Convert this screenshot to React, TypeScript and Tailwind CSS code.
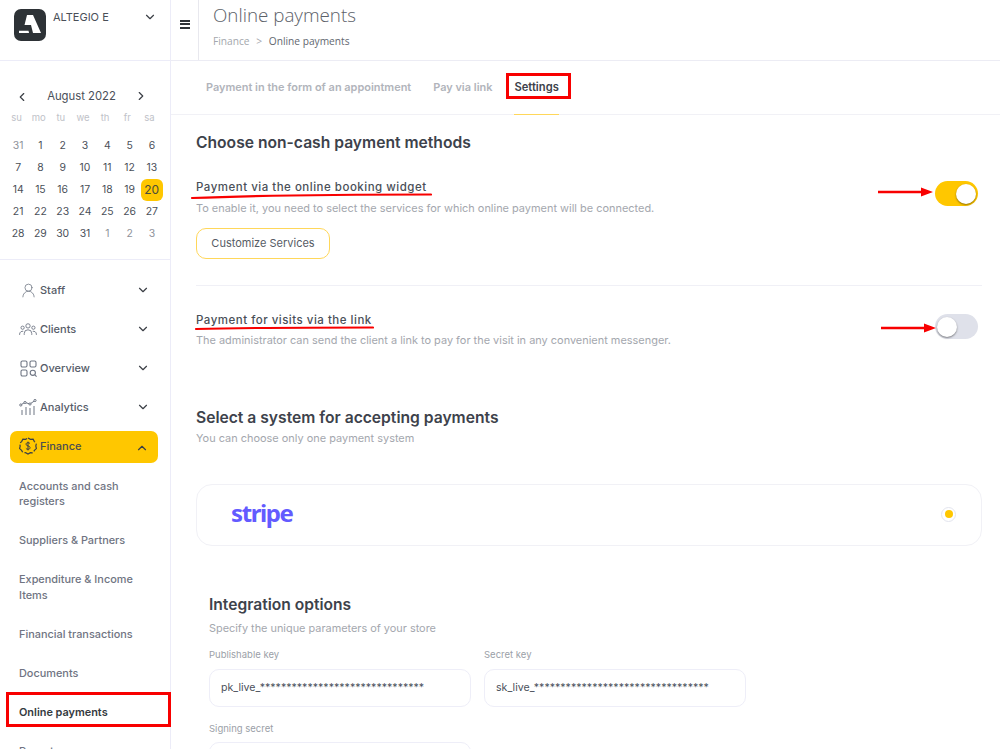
import { ChevronDown, ChevronUp, ChevronLeft, ChevronRight, UserRound } from "lucide-react";

const weeks = [
  ["31", "1", "2", "3", "4", "5", "6"],
  ["7", "8", "9", "10", "11", "12", "13"],
  ["14", "15", "16", "17", "18", "19", "20"],
  ["21", "22", "23", "24", "25", "26", "27"],
  ["28", "29", "30", "31", "1", "2", "3"],
];

function ClientsIcon() {
  return (
    <svg width="18" height="13" viewBox="0 0 20 14" fill="none" stroke="#6f7684" strokeWidth="1">
      <circle cx="10" cy="3" r="2.4" />
      <circle cx="4" cy="5" r="1.8" />
      <circle cx="16" cy="5" r="1.8" />
      <path d="M5.8 13v-1.5a4.2 4.2 0 0 1 8.4 0V13" />
      <path d="M.7 13v-1a3.3 3.3 0 0 1 4-3M19.3 13v-1a3.3 3.3 0 0 0-4-3" />
    </svg>
  );
}

function OverviewIcon() {
  return (
    <svg width="17" height="17" viewBox="0 0 17 17" fill="none" stroke="#6f7684" strokeWidth="1.1">
      <rect x="1" y="1" width="6" height="6" rx="1.4" />
      <rect x="10" y="1" width="6" height="6" rx="1.4" />
      <rect x="1" y="10" width="6" height="6" rx="1.4" />
      <circle cx="12.8" cy="12.8" r="2.6" />
      <path d="M14.8 14.8l1.8 1.8" />
    </svg>
  );
}

function AnalyticsIcon() {
  return (
    <svg width="18" height="16" viewBox="0 0 18 16" fill="none" stroke="#6f7684" strokeWidth="1">
      <circle cx="1.8" cy="6" r="1.1" />
      <circle cx="6" cy="3.5" r="1.1" />
      <circle cx="11" cy="5" r="1.1" />
      <circle cx="16" cy="1.5" r="1.1" />
      <path d="M2.7 5.3l2.4-1.4M7 3.8l3 .9M11.9 4.3l3.2-2.1" />
      <path d="M3 11v5M7 8v8M11 9v7M15 7v9" />
    </svg>
  );
}

function FinanceIcon() {
  return (
    <svg width="18" height="18" viewBox="0 0 18 18" fill="none" stroke="#3b3f46" strokeWidth="1.2">
      <path d="M9 1l2.4 1.3 2.7-.1 1.3 2.4 2 1.8-.6 2.6.6 2.6-2 1.8-1.3 2.4-2.7-.1L9 17l-2.4-1.3-2.7.1-1.3-2.4-2-1.8.6-2.6-.6-2.6 2-1.8 1.3-2.4 2.7.1z" strokeDasharray="9 2" />
      <path d="M11 6.6C10.6 6 9.9 5.7 9 5.7c-1.2 0-2 .6-2 1.5 0 2.2 4.1 1.2 4.1 3.5 0 .9-.9 1.6-2.1 1.6-1 0-1.7-.4-2.1-1M9 4.6v8.8" strokeWidth="1" />
    </svg>
  );
}

function NavRow({ icon, label, open }: { icon: React.ReactNode; label: string; open?: boolean }) {
  return (
    <div
      className={`h-[32px] ml-[10px] mr-[12px] mb-[7px] pl-[8px] pr-[9px] pb-[2px] rounded-[7px] flex items-center ${
        open ? "bg-[#ffc700] text-[#4a4d52]" : "text-[#565c68]"
      }`}
    >
      <div className="w-[22px] flex justify-center shrink-0 -ml-[1px]">{icon}</div>
      <span className="ml-[1px] flex-1 text-[11px] font-medium">{label}</span>
      {open ? (
        <ChevronUp size={14} strokeWidth={2} className="text-[#3b3f46] mt-[3px]" />
      ) : (
        <ChevronDown size={14} strokeWidth={2} className="text-[#3b3f46] mr-[-1px]" />
      )}
    </div>
  );
}

function SubItem({ children, active }: { children: React.ReactNode; active?: boolean }) {
  return (
    <div
      className={`pl-[19px] pr-[20px] py-[11.7px] text-[10.9px] leading-[15.6px] ${
        active ? "font-semibold text-[#343a40]" : "font-medium text-[#6f7482]"
      }`}
    >
      {children}
    </div>
  );
}

function Toggle({ on }: { on?: boolean }) {
  return (
    <div
      className={`w-[43px] h-[25px] rounded-full flex items-center px-[2px] ${
        on ? "bg-[#ffc700] justify-end" : "bg-[#dfe1ea] justify-start"
      }`}
    >
      <div className="w-[20px] h-[20px] rounded-full bg-white shadow-[0_1px_2px_rgba(0,0,0,0.45)]" />
    </div>
  );
}

function Arrow({ className }: { className: string }) {
  return (
    <svg className={`absolute ${className}`} width="55" height="10" viewBox="0 0 55 10" fill="#f80000">
      <path d="M0 3.8h43V0.5L55 5 43 9.5V6.2H0z" />
    </svg>
  );
}

function KeyField({ label, value, className }: { label: string; value: string; className?: string }) {
  return (
    <div className={`w-[262px] ${className ?? ""}`}>
      <div className="text-[9.5px] leading-[12px] text-[#9b9fa8] mb-[7.5px]">{label}</div>
      <div className="h-[38px] rounded-[10px] border border-[#eeeef8] pl-[11px] flex items-center text-[10.6px] text-[#4a4f5a]">
        {value}
      </div>
    </div>
  );
}

export default function App() {
  return (
    <div className="relative h-screen overflow-hidden bg-white flex font-['Inter',sans-serif]">
      <aside className="w-[171px] shrink-0 border-r border-[#ececf8] flex flex-col">
        <div className="h-[61px] shrink-0 border-b border-[#ececf8] pl-[14px] pr-[13px] pt-[9px] flex items-start">
          <div className="w-[32px] h-[32px] rounded-[7px] bg-[#2d3236]">
            <svg width="32" height="32" viewBox="0 0 32 32" fill="white">
              <path d="M13 6h6l8 18h-8l-2-8h-6.5z" />
              <path d="M5 21.7h9.5l.6 2.3H5z" />
            </svg>
          </div>
          <span className="ml-[7px] mt-[1px] flex-1 text-[11px] leading-[15px] text-[#4a4f58]">ALTEGIO E</span>
          <ChevronDown size={14} strokeWidth={2} className="text-[#3b3f46] mt-[1px]" />
        </div>

        <div className="h-[199px] shrink-0 border-b border-[#ececf8] pt-[26px] px-[7px]">
          <div className="flex items-center h-[18px] pl-[8px] pr-[15px] text-[#3b3f46]">
            <ChevronLeft size={14} strokeWidth={2} className="mt-[2px]" />
            <span className="flex-1 text-center text-[11.3px] text-[#4a4f58]">August 2022</span>
            <ChevronRight size={14} strokeWidth={2} />
          </div>
          <div className="grid grid-cols-7 mt-[5px] -ml-[1.5px] w-[155px] text-center text-[9.5px] leading-[16px] text-[#c0c2c8]">
            {["su", "mo", "tu", "we", "th", "fr", "sa"].map((d) => (
              <div key={d}>{d}</div>
            ))}
          </div>
          <div className="mt-[9px] w-[156px] text-[10.4px] text-[#4a4f58]">
            {weeks.map((week, w) => (
              <div key={w} className="grid grid-cols-7 h-[22px] items-center text-center">
                {week.map((day, i) => {
                  const muted = (w === 0 && i === 0) || (w === 4 && i > 3);
                  const today = w === 2 && i === 6;
                  return (
                    <div
                      key={i}
                      className={
                        today
                          ? "h-[22px] w-[22px] rounded-[6px] bg-[#ffc700] text-[12px] leading-[22px] text-[#4a4d3a]"
                          : muted
                            ? "text-[#8e929a]"
                            : ""
                      }
                    >
                      {day}
                    </div>
                  );
                })}
              </div>
            ))}
          </div>
        </div>

        <nav className="pt-[15px]">
          <NavRow label="Staff" icon={<UserRound size={17} strokeWidth={1.1} className="text-[#6f7684]" />} />
          <NavRow label="Clients" icon={<ClientsIcon />} />
          <NavRow label="Overview" icon={<OverviewIcon />} />
          <NavRow label="Analytics" icon={<AnalyticsIcon />} />
          <NavRow label="Finance" open icon={<FinanceIcon />} />
          <div className="-mt-[3px]">
            <SubItem>Accounts and cash registers</SubItem>
            <SubItem>Suppliers &amp; Partners</SubItem>
            <SubItem>Expenditure &amp; Income Items</SubItem>
            <SubItem>Financial transactions</SubItem>
            <SubItem>Documents</SubItem>
            <SubItem active>Online payments</SubItem>
            <SubItem>Reports</SubItem>
          </div>
        </nav>
      </aside>

      <main className="flex-1 min-w-0 flex flex-col">
        <header className="h-[61px] shrink-0 border-b border-[#ececf4] flex">
          <div className="w-[28px] h-[60px] border-r border-[#e8e8ee] flex items-center justify-center pb-[12px]">
            <div className="w-[10px] flex flex-col gap-[1.5px]">
              <div className="h-[2px] bg-[#2d3236]" />
              <div className="h-[2px] bg-[#2d3236]" />
              <div className="h-[2px] bg-[#2d3236]" />
            </div>
          </div>
          <div className="pl-[14px] pt-[2px] font-['Open_Sans',sans-serif]">
            <div className="text-[18.8px] leading-[26px] font-light text-[#5c6169]">Online payments</div>
            <div className="mt-[6px] text-[10.2px] leading-[14px] text-[#a4a7ad]">
              Finance <span className="mx-[4px]">&gt;</span> <span className="text-[#62676f]">Online payments</span>
            </div>
          </div>
        </header>

        <div className="h-[54px] shrink-0 border-b border-[#f1f1f6] pl-[35px] flex items-center text-[10.95px] font-semibold text-[#b1b4bb]">
          <span>Payment in the form of an appointment</span>
          <span className="ml-[22px]">Pay via link</span>
          <div className="relative ml-[22px] h-full flex items-center">
            <span className="text-[11.2px] text-[#3d424b]">Settings</span>
            <div className="absolute left-0 right-0 bottom-[-1px] h-[1.5px] bg-[#ffd75a]" />
          </div>
        </div>

        <div className="pl-[25px] pr-[18px]">
          <h1 className="mt-[17px] text-[15.65px] leading-[22px] font-semibold text-[#3d424b]">Choose non-cash payment methods</h1>

          <div className="mt-[25px] flex items-start justify-between pr-[4px]">
            <div>
              <div className="text-[11.5px] leading-[16px] font-medium text-[#4a4f58] tracking-[0.5px]">Payment via the online booking widget</div>
              <div className="mt-[5px] text-[10.94px] leading-[16px] text-[#a4a7ae]">
                To enable it, you need to select the services for which online payment will be connected.
              </div>
              <button className="mt-[12px] h-[31px] w-[134px] rounded-[10px] border border-[#ffd75a] text-[11px] text-[#565b64]">
                Customize Services
              </button>
            </div>
            <div className="mt-[2px]">
              <Toggle on />
            </div>
          </div>

          <div className="mt-[26px] h-px bg-[#f0f0f6]" />

          <div className="mt-[26px] flex items-start justify-between pr-[4px]">
            <div>
              <div className="text-[11.5px] leading-[16px] font-medium text-[#4a4f58] tracking-[0.5px]">Payment for visits via the link</div>
              <div className="mt-[4px] text-[10.94px] leading-[16px] text-[#a4a7ae]">
                The administrator can send the client a link to pay for the visit in any convenient messenger.
              </div>
            </div>
            <div className="mt-[2px]">
              <Toggle />
            </div>
          </div>

          <h2 className="mt-[59px] text-[15.65px] leading-[22px] font-semibold text-[#3d424b]">Select a system for accepting payments</h2>
          <div className="mt-[1px] text-[10.94px] leading-[16px] text-[#a4a7ae]">You can choose only one payment system</div>

          <div className="mt-[38px] h-[62px] rounded-[16px] border border-[#f1f1f6] pl-[34px] pr-[25px] flex items-center justify-between">
            <span className="font-['Noto_Sans',sans-serif] text-[24px] font-bold tracking-[-1.4px] text-[#635bff] leading-none -mt-[5px]">stripe</span>
            <div className="w-[15px] h-[15px] mb-[2px] rounded-full border border-[#e3e5ee] flex items-center justify-center">
              <div className="w-[8px] h-[8px] rounded-full bg-[#ffc700]" />
            </div>
          </div>

          <div className="pl-[13px]">
            <h3 className="mt-[48px] text-[15.6px] leading-[21px] font-semibold text-[#3d424b]">Integration options</h3>
            <div className="mt-[5px] text-[10.9px] leading-[16px] text-[#a4a7ae]">Specify the unique parameters of your store</div>
            <div className="mt-[13px] flex gap-[13px]">
              <KeyField label="Publishable key" value="pk_live_*******************************" />
              <KeyField label="Secret key" value="sk_live_*********************************" />
            </div>
            <KeyField className="mt-[16px]" label="Signing secret" value="" />
          </div>
        </div>
      </main>

      {/* Red markup drawn over the screenshot */}
      <div className="absolute left-[6px] top-[692px] w-[165px] h-[35px] border-[3px] border-[#f80000]" />
      <div className="absolute left-[506px] top-[73px] w-[65px] h-[26px] border-[3px] border-[#f80000]" />
      <svg className="absolute left-[190px] top-[192px]" width="242" height="8" viewBox="0 0 242 8" fill="none" stroke="#f80000" strokeWidth="2.2" strokeLinecap="round">
        <path d="M2 6C60 3.5 170 2.5 241 2.5" />
      </svg>
      <svg className="absolute left-[194px] top-[325px]" width="180" height="6" viewBox="0 0 180 6" fill="none" stroke="#f80000" strokeWidth="2.2" strokeLinecap="round">
        <path d="M2 4C60 2.5 120 2.5 179 2.5" />
      </svg>
      <Arrow className="left-[878px] top-[187px]" />
      <Arrow className="left-[881px] top-[323px]" />
    </div>
  );
}
